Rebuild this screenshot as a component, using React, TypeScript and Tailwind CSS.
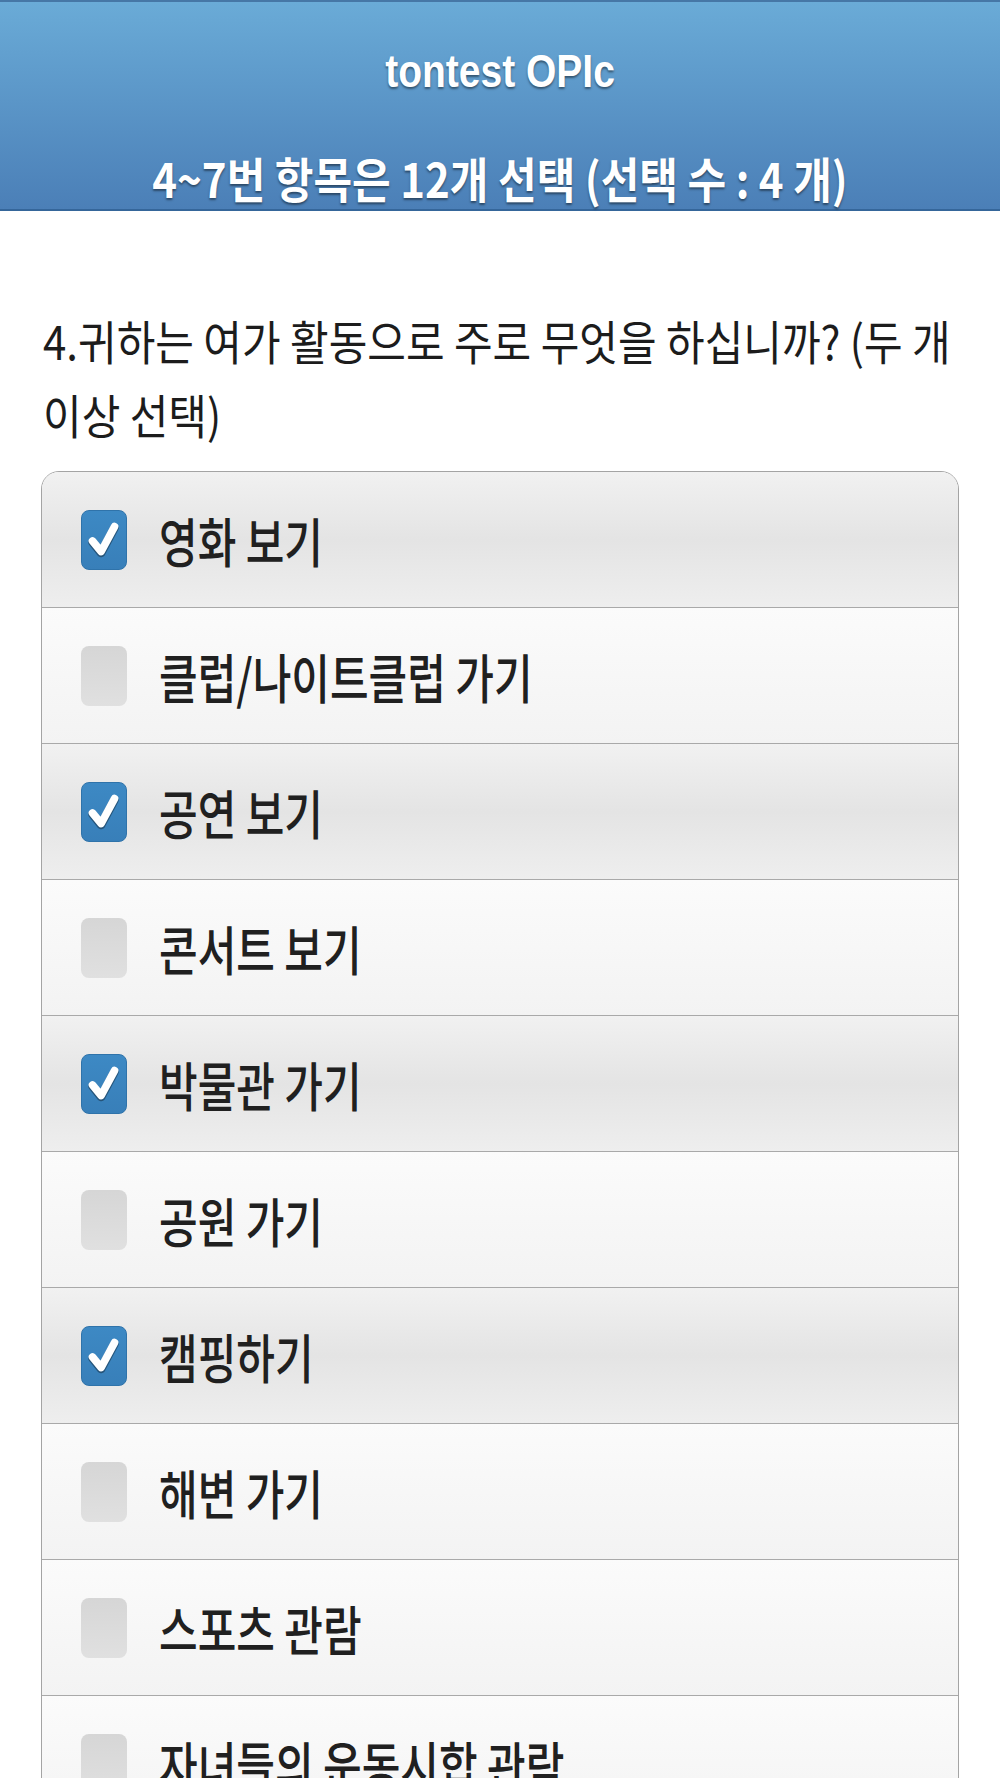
import React from "react";

const items = [
  { label: "영화 보기", checked: true },
  { label: "클럽/나이트클럽 가기", checked: false },
  { label: "공연 보기", checked: true },
  { label: "콘서트 보기", checked: false },
  { label: "박물관 가기", checked: true },
  { label: "공원 가기", checked: false },
  { label: "캠핑하기", checked: true },
  { label: "해변 가기", checked: false },
  { label: "스포츠 관람", checked: false },
  { label: "자녀들의 운동시합 관람", checked: false },
  { label: "게임하기", checked: false },
];

function CheckBox({ checked }: { checked: boolean }) {
  if (!checked) {
    return (
      <span className="block w-[46px] h-[60px] shrink-0 rounded-[8px] bg-gradient-to-b from-[#d6d6d6] to-[#e0e0e0]" />
    );
  }
  return (
    <span className="flex w-[46px] h-[60px] shrink-0 items-center justify-center rounded-[8px] border border-[#2f73aa] bg-gradient-to-b from-[#3d89c4] to-[#387fb9]">
      <svg width="46" height="60" viewBox="0 0 46 60">
        <path
          d="M11 31 L20 42 L34 16"
          fill="none"
          stroke="rgba(0,0,0,0.35)"
          strokeWidth="9"
          strokeLinecap="round"
          strokeLinejoin="round"
          transform="translate(0 1.5)"
        />
        <path
          d="M11 31 L20 42 L34 16"
          fill="none"
          stroke="#ffffff"
          strokeWidth="8"
          strokeLinecap="round"
          strokeLinejoin="round"
        />
      </svg>
    </span>
  );
}

export default function App() {
  return (
    <div className="w-[1000px] min-h-[1778px] bg-white font-['Noto_Sans_CJK_KR',sans-serif]">
      {/* header bar */}
      <div className="h-[211px] flex flex-col border-t-2 border-t-[#4677a6] border-b-2 border-b-[#35669a] bg-gradient-to-b from-[#6aabd7] to-[#4b7fb7] text-white [text-shadow:0_2px_2px_rgba(0,0,0,0.45)]">
        <div className="h-[136px] flex items-center justify-center">
          <span className="inline-block scale-y-[1.2] font-['Liberation_Sans',sans-serif] font-bold text-[39px] leading-none">
            tontest OPIc
          </span>
        </div>
        <div className="h-[71px] pt-[6px] flex items-center justify-center">
          <span className="inline-block scale-y-[1.14] font-bold text-[42px] leading-none">
            4~7번 항목은 12개 선택 (선택 수 : 4 개)
          </span>
        </div>
      </div>

      {/* question */}
      <p className="mt-[99px] px-[43px] h-[125px] text-[42px] leading-[66px] text-[#1c1c1c] whitespace-nowrap scale-y-[1.12]">
        4.귀하는 여가 활동으로 주로 무엇을 하십니까? (두 개
        <br />
        이상 선택)
      </p>

      {/* choices */}
      <div className="mt-[36px] mx-[41px] rounded-t-[18px] border border-[#a4a4a4] overflow-hidden">
        {items.map((it) => (
          <div
            key={it.label}
            className={
              it.checked
                ? "h-[136px] flex items-center gap-[32px] pl-[39px] border-b border-[#a9a9a9] bg-gradient-to-b from-[#f1f1f1] via-[#e4e4e4] to-[#eeeeee]"
                : "h-[136px] flex items-center gap-[32px] pl-[39px] border-b border-[#a9a9a9] bg-gradient-to-b from-[#fbfbfb] to-[#f3f3f3]"
            }
          >
            <CheckBox checked={it.checked} />
            <span className="inline-block scale-y-[1.28] text-[42px] font-medium leading-none text-[#202020]">
              {it.label}
            </span>
          </div>
        ))}
      </div>
    </div>
  );
}
